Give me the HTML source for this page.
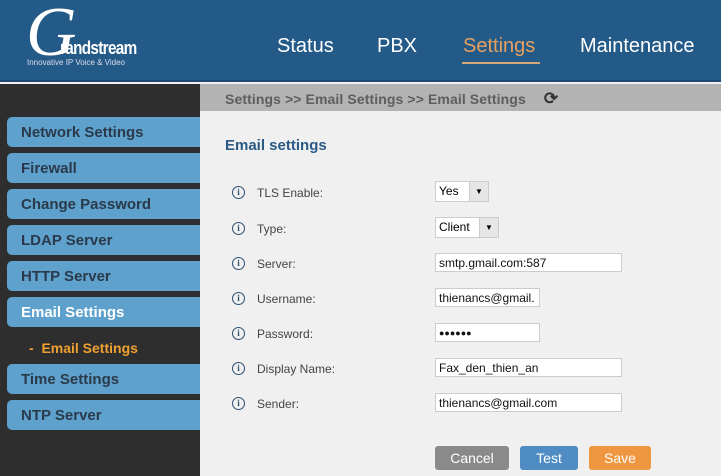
<!DOCTYPE html><html><head><style>
*{margin:0;padding:0;box-sizing:border-box}
body{width:721px;height:476px;overflow:hidden;background:#f0f0f0;font-family:"Liberation Sans",Arial,sans-serif;position:relative}
.hdr{position:absolute;left:0;top:0;width:721px;height:82px;background:#235a87;border-bottom:2px solid #1d4a70}
.nav{position:absolute;top:35px;font-size:20px;color:#fff}
.side{position:absolute;left:0;top:84px;width:200px;height:392px;background:#2e2e2e}
.mi{position:absolute;left:7px;width:193px;height:30px;background:#5fa1cd;border-radius:5px 0 0 5px;font-weight:bold;font-size:15px;color:#2a3a4a;padding:7px 0 0 14px}
.bc{position:absolute;left:200px;top:84px;width:521px;height:27px;background:#b3b3b3;font-weight:bold;font-size:14px;color:#5e5e5e;padding:5px 0 0 25px;letter-spacing:0.1px}
.lab{position:absolute;left:257px;font-size:12px;color:#444}
.ic{position:absolute;left:232px;width:13px;height:13px;border:1.3px solid #2c4f70;border-radius:50%;font:bold 9px "Liberation Serif",serif;color:#2c4f70;text-align:center;line-height:11px}
.in{position:absolute;left:435px;height:19px;background:#fff;border:1px solid #ccc;font-size:12px;color:#111;padding:2px 0 0 3px}
.sel{position:absolute;left:435px;height:21px;background:#fff;border:1px solid #ccc;font-size:12px;padding:2px 0 0 3px}
.sel b{position:absolute;right:0;top:0;width:19px;height:19px;background:#e6e6e6;border-left:1px solid #ccc;font-size:8px;text-align:center;line-height:19px;font-weight:normal}
.btn{position:absolute;top:446px;height:24px;border-radius:3px;color:#fff;font-size:14px;text-align:center;line-height:25px}
</style></head><body>
<div class="hdr">
<div style="position:absolute;left:26px;top:0px;font:italic 70px 'Liberation Serif',serif;color:#fff;line-height:66px">G</div>
<div style="position:absolute;left:60px;top:38px;font:bold 18px 'Liberation Sans Narrow','Liberation Sans',sans-serif;color:#fff;letter-spacing:-0.8px;transform:scaleX(0.85);transform-origin:left">randstream</div>
<div style="position:absolute;left:27px;top:58px;font-size:8px;color:#dde">Innovative IP Voice &amp; Video</div>
<div class="nav" style="left:277px">Status</div>
<div class="nav" style="left:377px">PBX</div>
<div class="nav" style="left:463px;color:#e8a060">Settings</div>
<div style="position:absolute;left:462px;top:62px;width:78px;height:2px;background:#d4a878"></div>
<div class="nav" style="left:580px">Maintenance</div>
</div>
<div class="side">
<div class="mi" style="top:33px">Network Settings</div>
<div class="mi" style="top:69px">Firewall</div>
<div class="mi" style="top:105px">Change Password</div>
<div class="mi" style="top:141px">LDAP Server</div>
<div class="mi" style="top:177px">HTTP Server</div>
<div class="mi" style="top:213px;color:#fff">Email Settings</div>
<div style="position:absolute;left:29px;top:256px;font-weight:bold;font-size:14px;color:#f0a030">-&nbsp; Email Settings</div>
<div style="position:absolute;left:192px;top:256px;width:0;height:0;border:8px solid transparent;border-right-color:#f0f0f0"></div>
<div class="mi" style="top:280px">Time Settings</div>
<div class="mi" style="top:316px">NTP Server</div>
</div>
<div class="bc">Settings &gt;&gt; Email Settings &gt;&gt; Email Settings <span style="margin-left:14px;font-size:17px;color:#333">⟳</span></div>
<div style="position:absolute;left:225px;top:137px;font-size:15px;font-weight:bold;color:#2a5a85">Email settings</div>
<div class="ic" style="top:186px">i</div><div class="lab" style="top:186px">TLS Enable:</div>
<div class="ic" style="top:222px">i</div><div class="lab" style="top:222px">Type:</div>
<div class="ic" style="top:257px">i</div><div class="lab" style="top:257px">Server:</div>
<div class="ic" style="top:292px">i</div><div class="lab" style="top:292px">Username:</div>
<div class="ic" style="top:327px">i</div><div class="lab" style="top:327px">Password:</div>
<div class="ic" style="top:362px">i</div><div class="lab" style="top:362px">Display Name:</div>
<div class="ic" style="top:397px">i</div><div class="lab" style="top:397px">Sender:</div>
<div class="sel" style="top:181px;width:54px">Yes<b>▼</b></div>
<div class="sel" style="top:217px;width:64px">Client<b>▼</b></div>
<div class="in" style="top:253px;width:187px">smtp.gmail.com:587</div>
<div class="in" style="top:288px;width:105px;overflow:hidden;white-space:nowrap">thienancs@gmail.</div>
<div class="in" style="top:323px;width:105px;font-size:9px;padding-top:4px">●●●●●●</div>
<div class="in" style="top:358px;width:187px">Fax_den_thien_an</div>
<div class="in" style="top:393px;width:187px">thienancs@gmail.com</div>
<div class="btn" style="left:435px;width:74px;background:#8a8a8a">Cancel</div>
<div class="btn" style="left:520px;width:58px;background:#4f8cc4">Test</div>
<div class="btn" style="left:589px;width:62px;background:#ef9640">Save</div>
</body></html>
